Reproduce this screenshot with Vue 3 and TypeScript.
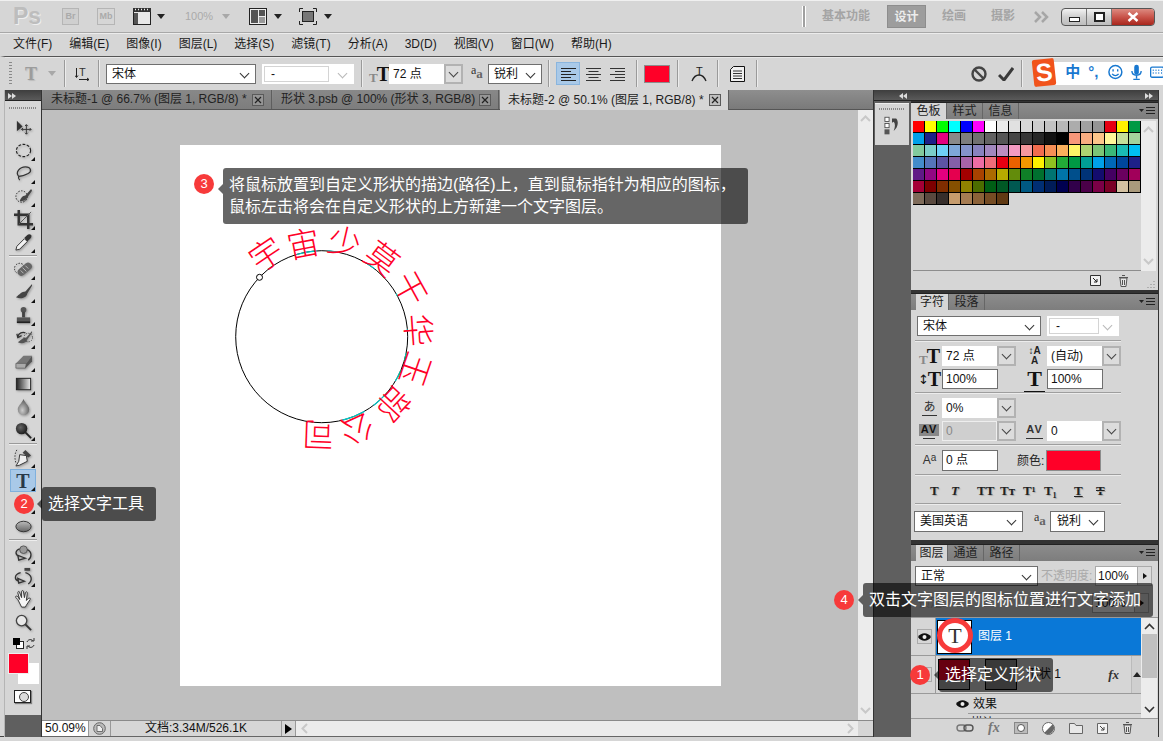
<script setup lang="ts">
const menus = ['文件(F)', '编辑(E)', '图像(I)', '图层(L)', '选择(S)', '滤镜(T)', '分析(A)', '3D(D)', '视图(V)', '窗口(W)', '帮助(H)']

const tabs = [
  { title: '未标题-1 @ 66.7% (图层 1, RGB/8) *', active: false, w: 229 },
  { title: '形状 3.psb @ 100% (形状 3, RGB/8)', active: false, w: 226 },
  { title: '未标题-2 @ 50.1% (图层 1, RGB/8) *', active: true, w: 229 },
]

const swatches = [
  '#ff0000', '#ffff00', '#00ff00', '#00ffff', '#0000ff', '#ff00ff', '#ffffff', '#ebebeb', '#e1e1e1', '#d7d7d7', '#cccccc', '#c2c2c2', '#b7b7b7', '#acacac', '#a1a1a1', '#959595', '#e60012', '#fff100', '#009944',
  '#00a0e9', '#1d2088', '#e4007f', '#898989', '#7d7d7d', '#707070', '#626262', '#555555', '#464646', '#363636', '#262626', '#111111', '#000000', '#f7977a', '#f9ad81', '#fdc68a', '#fff799', '#c4df9b', '#a3d39c',
  '#82ca9d', '#7bcdc8', '#6ecff6', '#7ea7d8', '#8493ca', '#8882be', '#a187be', '#bc8dbf', '#f49ac2', '#f6989d', '#f26c4f', '#f68e55', '#fbaf5c', '#fff467', '#acd372', '#7cc576', '#3bb878', '#1abbb4', '#00bff3',
  '#438cca', '#5574b9', '#5c54a4', '#855fa8', '#a763a8', '#ee6ca5', '#ef6c7a', '#e60012', '#eb6100', '#f39800', '#fff100', '#8fc31f', '#22ac38', '#009944', '#009e96', '#00a0e9', '#0068b7', '#00479d', '#1d2088',
  '#601986', '#920783', '#e4007f', '#e5004f', '#a40000', '#a84200', '#ac6a00', '#b7aa00', '#638c0b', '#0f7f27', '#00702f', '#007471', '#0075a9', '#004f8c', '#003377', '#130c6e', '#440062', '#6a005f', '#a1005a',
  '#a40035', '#7d0000', '#7f2d00', '#855000', '#8f8200', '#4b6d00', '#005e15', '#005825', '#005951', '#005982', '#002e73', '#001c58', '#000050', '#31004a', '#4b0049', '#7b0046', '#7a0026', '#d3c1a1', '#a99a7c',
  '#7e6b5a', '#59493f', '#362e2b', '#c69c6d', '#a67c52', '#8c6239', '#754c24', '#603913',
]

const glyphs = [
  { c: '宇', x: 265, y: 253, r: -34 },
  { c: '宙', x: 303, y: 242, r: -11 },
  { c: '少', x: 345, y: 240, r: 13 },
  { c: '莫', x: 383, y: 257, r: 37 },
  { c: '干', x: 412, y: 288, r: 61 },
  { c: '华', x: 420, y: 330, r: 86 },
  { c: '玉', x: 417, y: 370, r: 109 },
  { c: '部', x: 395, y: 405, r: 133 },
  { c: '公', x: 358, y: 430, r: 159 },
  { c: '司', x: 318, y: 437, r: 182 },
]

// Short cyan pieces of the path, given in degrees clockwise from the top.
const cx = 321.7
const cy = 336.7
const radius = 86
function arc(a: number, b: number): string {
  const p = (d: number) => {
    const t = (d * Math.PI) / 180
    return `${(cx + radius * Math.sin(t)).toFixed(1)} ${(cy - radius * Math.cos(t)).toFixed(1)}`
  }
  return `M${p(a)}A${radius} ${radius} 0 0 1 ${p(b)}`
}
const tealArcs = [[-38, -35], [-17, -3], [4, 11], [32, 38], [44, 46], [60, 62], [85, 86], [101, 106], [113, 121], [133, 143], [150, 166]].map(([a, b]) => arc(a, b))

const styleIcons = [
  { t: 'T', cls: 'b', ml: 17, w: 8 },
  { t: 'T', cls: 'i', ml: 13, w: 8 },
  { t: 'TT', cls: 'b', ml: 18, w: 16 },
  { t: 'Tᴛ', cls: 'b', ml: 7, w: 14 },
  { t: 'T¹', cls: 'b', ml: 9, w: 12 },
  { t: 'T₁', cls: 'b', ml: 9, w: 12 },
  { t: 'T', cls: 'u', ml: 18, w: 8 },
  { t: 'T', cls: 's', ml: 14, w: 8 },
]
</script>

<template>
  <div class="app">
    <!-- title bar -->
    <header class="titlebar">
      <span class="ps">Ps</span>
      <span class="bridge br">Br</span>
      <span class="bridge mb">Mb</span>
      <svg class="t-film" width="18" height="17" viewBox="0 0 18 17">
        <rect x=".5" y=".5" width="17" height="16" fill="#e8e8e8" stroke="#222" />
        <rect x="0" y="0" width="18" height="4" fill="#333" />
        <path d="M2 1.500h1M5 1.500h1M8 1.500h1M11 1.500h1M14 1.500h1" stroke="#eee" stroke-width="1.500" />
        <rect x="1" y="5" width="4" height="11" fill="#555" />
      </svg>
      <i class="caret c1"></i>
      <span class="zoomtxt">100%</span>
      <i class="caret light c2"></i>
      <svg class="t-layout" width="18" height="17" viewBox="0 0 18 17">
        <rect x=".5" y=".5" width="17" height="16" fill="#eee" stroke="#222" />
        <rect x="2" y="2" width="7" height="13" fill="#555" />
        <rect x="10" y="2" width="6" height="6" fill="#555" />
        <rect x="10" y="9" width="6" height="6" fill="#999" />
      </svg>
      <i class="caret c3"></i>
      <svg class="t-screen" width="18" height="17" viewBox="0 0 18 17">
        <path d="M.5 4V.5H4M14 .5h3.500V4M17.500 13v3.500H14M4 16.500H.5V13" fill="none" stroke="#222" />
        <rect x="3.500" y="3.500" width="11" height="10" fill="#777" stroke="#222" />
      </svg>
      <i class="caret c4"></i>

      <i class="dbl-rule"></i>
      <span class="ws first">基本功能</span>
      <span class="ws active">设计</span>
      <span class="ws w3">绘画</span>
      <span class="ws w4">摄影</span>
      <svg class="more" width="15" height="12" viewBox="0 0 15 12"><path d="M1 1l5 5-5 5M8 1l5 5-5 5" fill="none" stroke="#a6a6a6" stroke-width="2.500" /></svg>
      <div class="winbtns">
        <span class="wb"><i class="wmin"></i></span>
        <span class="wb"><i class="wmax"></i></span>
        <span class="wb close">
          <svg width="12" height="10" viewBox="0 0 12 10"><path d="M1.500 1l9 8M10.500 1l-9 8" stroke="#fff" stroke-width="2.400" /></svg>
        </span>
      </div>
    </header>

    <nav class="menubar">
      <span v-for="m in menus" :key="m">{{ m }}</span>
    </nav>

    <!-- options bar -->
    <section class="options">
      <i class="grip-v"></i>
      <span class="opt-t">T</span>
      <i class="caret light o-c"></i>
      <i class="vr v1"></i>
      <svg class="o-orient" width="15" height="15" viewBox="0 0 15 15">
        <text x="4" y="10" class="serif-b" font-size="11" fill="#333">T</text>
        <path d="M1.500 2v9M0 9.500l1.500 2 1.500-2M4 13.500h10M12 12l2 1.500-2 1.500" fill="none" stroke="#222" />
      </svg>
      <i class="vr v2"></i>
      <div class="sel o-font">宋体</div>
      <div class="sel disabled o-style"><span class="in">-</span></div>
      <i class="vr v3"></i>
      <span class="tticon o-tt"><small>T</small>T</span>
      <div class="combo o-size"><span class="fld">72 点</span><span class="drop"></span></div>
      <span class="aa o-aa"><small>a</small><b>a</b></span>
      <div class="sel o-aas">锐利</div>
      <i class="vr v4"></i>
      <span class="al active"><svg width="15" height="14" viewBox="0 0 15 14"><path d="M0 1.500h15M0 4.500h10M0 7.500h15M0 10.500h10M0 13.500h15" stroke="#222" /></svg></span>
      <span class="al a2"><svg width="15" height="14" viewBox="0 0 15 14"><path d="M0 1.500h15M2.500 4.500h10M0 7.500h15M2.500 10.500h10M0 13.500h15" stroke="#333" /></svg></span>
      <span class="al a3"><svg width="15" height="14" viewBox="0 0 15 14"><path d="M0 1.500h15M5 4.500h10M0 7.500h15M5 10.500h10M0 13.500h15" stroke="#333" /></svg></span>
      <i class="vr v5"></i>
      <span class="o-color"></span>
      <i class="vr v6"></i>
      <svg class="o-warp" width="16" height="17" viewBox="0 0 16 17">
        <text x="5" y="10" class="serif-b" font-size="11" fill="#222">T</text>
        <path d="M1 16c2-5 4-6 7-6s5 1 7 6" fill="none" stroke="#222" stroke-width="1.300" />
      </svg>
      <i class="vr v7"></i>
      <svg class="o-panel" width="15" height="16" viewBox="0 0 15 16">
        <path d="M.5 3.500L3.500.5h11v15H.5z" fill="#f0f0f0" stroke="#111" />
        <path d="M3 5h9M3 7.500h9M3 10h9M3 12.500h9" stroke="#333" stroke-width="1.200" />
      </svg>
      <i class="vr v8"></i>
      <svg class="o-cancel" width="16" height="16" viewBox="0 0 16 16"><circle cx="8" cy="8" r="6.500" fill="none" stroke="#444" stroke-width="2.400" /><path d="M3.500 3.500l9 9" stroke="#444" stroke-width="2.400" /></svg>
      <svg class="o-commit" width="16" height="14" viewBox="0 0 16 14"><path d="M1 8l5 5 9-12" fill="none" stroke="#3a3a3a" stroke-width="3" /></svg>
      <i class="vr v9"></i>
    </section>

    <!-- IME floating bar -->
    <div class="ime">
      <span class="ime-logo">S</span>
      <span class="ime-zh">中</span>
      <span class="ime-pt">°,</span>
      <svg class="ime-smile" width="16" height="16" viewBox="0 0 16 16"><circle cx="8" cy="8" r="7" fill="none" stroke="#1878d0" stroke-width="1.600" /><path d="M5.500 5v2.500M10.500 5v2.500M4.500 10c2 2.500 5 2.500 7 0" fill="none" stroke="#1878d0" stroke-width="1.500" /></svg>
      <svg class="ime-mic" width="12" height="17" viewBox="0 0 12 17"><rect x="3.500" y="0" width="5" height="11" rx="2.500" fill="#1878d0" /><path d="M1 7c0 6 10 6 10 0M6 12v3M2.500 16h7" fill="none" stroke="#1878d0" stroke-width="1.500" /></svg>
      <svg class="ime-kb" width="14" height="14" viewBox="0 0 14 14"><rect x=".7" y="1.700" width="14" height="11" rx="1.500" fill="none" stroke="#1878d0" stroke-width="1.400" /><path d="M3 5h1M6 5h1M9 5h1M12 5h1M3 8h1M6 8h1M9 8h1M12 8h1" stroke="#1878d0" stroke-width="1.600" /></svg>
    </div>

    <main class="workspace">
      <!-- tools -->
      <aside class="toolbar">
        <div class="tool-head"><i class="arrows r"></i></div>
        <i class="dotgrip"></i>
        <div class="tools">
          <div class="tool plain"><svg viewBox="0 0 20 20"><path d="M3 3v11l6-5z" fill="#333" /><path d="M13 7v10M8 12h10M11.500 8.500L13 7l1.500 1.500M11.500 15.500L13 17l1.500-1.500M9.500 10.500L8 12l1.500 1.500M16.500 10.500L18 12l-1.500 1.500" fill="none" stroke="#333" /></svg></div>
          <div class="tool"><svg viewBox="0 0 20 20"><ellipse cx="10" cy="10" rx="7.500" ry="6.500" fill="none" stroke="#222" stroke-width="1.200" stroke-dasharray="3 1.500" /></svg></div>
          <div class="tool"><svg viewBox="0 0 20 20"><path d="M5 13C1 9 6 3 12 3s7 5 3 7-8 3-10 3zM5 13c-1 2 0 3 1 4" fill="none" stroke="#333" stroke-width="1.300" /></svg></div>
          <div class="tool"><svg viewBox="0 0 20 20"><circle cx="8" cy="10" r="6" fill="none" stroke="#222" stroke-dasharray="1.500 1.500" /><path d="M18 2l-6 7c-3 0-5 3-6 6 3 0 7-1 8-4l5-7z" fill="#444" /></svg></div>
          <div class="tool"><svg viewBox="0 0 20 20"><path d="M5 0v15h15" fill="none" stroke="#333" stroke-width="2.600" /><path d="M0 5h15v15" fill="none" stroke="#333" stroke-width="2.600" /><path d="M5 15L18 2" stroke="#555" /></svg></div>
          <div class="tool"><svg viewBox="0 0 20 20"><path d="M2 18l1-4 8-8 3 3-8 8z" fill="#f2f2f2" stroke="#333" /><path d="M11 5l3-3c1-1 3-1 4 0s0 3-1 4l-3 3z" fill="#333" /></svg></div>
          <i class="hr"></i>
          <div class="tool"><svg viewBox="0 0 20 20"><circle cx="6" cy="9" r="5.500" fill="none" stroke="#222" stroke-dasharray="1.500 1.500" /><rect x="3" y="6" width="17" height="8" rx="4" transform="rotate(-40 11 10)" fill="#666" /><path d="M9 8l4 4M12 6l3 3M7 11l3 3" stroke="#bbb" /></svg></div>
          <div class="tool"><svg viewBox="0 0 20 20"><path d="M19 1l-7 8c-4 0-6 3-10 6 5 2 11 1 12-4l5-8z" fill="#444" /></svg></div>
          <div class="tool"><svg viewBox="0 0 20 20"><circle cx="10" cy="4" r="3" fill="#555" /><rect x="8.500" y="6" width="3" height="6" fill="#444" /><rect x="3" y="12" width="14" height="4" fill="#555" /><rect x="3" y="16" width="14" height="2" fill="#222" /></svg></div>
          <div class="tool"><svg viewBox="0 0 20 20"><path d="M4 8c1-4 5-5 8-4M3 5l1 4 4-2" fill="none" stroke="#333" stroke-width="1.300" /><path d="M19 2l-6 7c-4 0-6 3-9 5 4 2 9 1 10-3l5-7z" fill="#555" /><circle cx="15" cy="9" r="4.500" fill="none" stroke="#444" stroke-dasharray="1.300 1.300" /></svg></div>
          <div class="tool"><svg viewBox="0 0 20 20"><path d="M2 12l8-8h9l-6 8z" fill="#777" /><path d="M2 12v5h10l1-5z" fill="#aaa" stroke="#555" stroke-width=".7" /><path d="M12 17l7-7V4l-6 8z" fill="#555" /></svg></div>
          <div class="tool"><svg viewBox="0 0 20 20"><defs><linearGradient id="g1" x1="0" x2="1"><stop offset="0" stop-color="#222" /><stop offset="1" stop-color="#eee" /></linearGradient></defs><rect x="2.500" y="3.500" width="15" height="12" fill="url(#g1)" stroke="#222" /></svg></div>
          <div class="tool"><svg viewBox="0 0 20 20"><defs><radialGradient id="g2" cx=".4" cy=".7" r=".7"><stop offset="0" stop-color="#ccc" /><stop offset="1" stop-color="#555" /></radialGradient></defs><path d="M10 1c2 5 6 7 6 11a6 6 0 0 1-12 0c0-4 4-6 6-11z" fill="url(#g2)" /></svg></div>
          <div class="tool"><svg viewBox="0 0 20 20"><defs><radialGradient id="g3" cx=".4" cy=".4" r=".7"><stop offset="0" stop-color="#666" /><stop offset="1" stop-color="#111" /></radialGradient></defs><circle cx="8" cy="8" r="6" fill="url(#g3)" /><path d="M12 12l6 6" stroke="#222" stroke-width="2" /></svg></div>
          <i class="hr"></i>
          <div class="tool"><svg viewBox="0 0 20 20"><path d="M6 7l7 1 1 6-8 4-4 1 3-5z" fill="#eee" stroke="#333" /><path d="M12 2l6 6-3 2-6-5z" fill="#444" /><path d="M3 2C0 7 1 12 2 16" fill="none" stroke="#333" stroke-dasharray="1.500 1.500" /></svg></div>
          <div class="tool selected"><span class="tool-t">T</span></div>
          <div class="tool"><svg viewBox="0 0 20 20"><rect x="3" y="4" width="14" height="12" fill="#777" /></svg></div>
          <div class="tool"><svg viewBox="0 0 20 20"><defs><linearGradient id="g4" x1="0" x2="0" y1="0" y2="1"><stop offset="0" stop-color="#bbb" /><stop offset="1" stop-color="#666" /></linearGradient></defs><ellipse cx="10" cy="10" rx="8" ry="5.500" fill="url(#g4)" stroke="#333" /></svg></div>
          <i class="hr"></i>
          <div class="tool"><svg viewBox="0 0 20 20"><circle cx="10" cy="6" r="4" fill="#999" stroke="#555" /><path d="M6 5C1 7 1 11 5 13M14 6c5 2 5 8 1 11M12 15l-8-3 1 5z" fill="none" stroke="#333" stroke-width="1.400" /></svg></div>
          <div class="tool"><svg viewBox="0 0 20 20"><rect x="11" y="1" width="6" height="3" fill="#444" /><path d="M7 6C0 8 0 13 5 15M12 6c7 2 8 8 3 12M11 15l-7-3 1 5z" fill="none" stroke="#333" stroke-width="1.400" /></svg></div>
          <div class="tool"><svg viewBox="0 0 20 20"><path d="M4 10L2 8c-1-2 1-2 2-1l2 3-2-7c0-2 2-2 2 0l2 5V2c0-2 2-2 2 0l1 6 1-5c1-2 2-1 2 0l-1 8 2-2c2-1 3 0 2 1l-4 6-1 2H8z" fill="#f4f4f4" stroke="#333" /></svg></div>
          <div class="tool plain"><svg viewBox="0 0 20 20"><circle cx="8" cy="8" r="5.500" fill="#e8e8e8" stroke="#444" stroke-width="1.400" /><path d="M12 12l6 6" stroke="#333" stroke-width="2" /></svg></div>
        </div>
        <div class="mini-colors">
          <svg width="11" height="11" viewBox="0 0 11 11"><rect x="3.500" y="3.500" width="7" height="7" fill="#fff" stroke="#222" /><rect x="0" y="0" width="7" height="7" fill="#000" /></svg>
          <svg width="11" height="11" viewBox="0 0 11 11"><path d="M2 4C3 1 7 1 8 3M9 7c-1 3-5 3-6 1M6 3h3V0M5 8H2v3" fill="none" stroke="#333" /></svg>
        </div>
        <div class="swatch-pair"><i class="bgc"></i><i class="fgc"></i></div>
        <div class="qmask"><i></i></div>
        <div class="tool-foot"></div>
      </aside>

      <!-- document area -->
      <div class="center">
        <div class="tabstrip">
          <div v-for="t in tabs" :key="t.title" class="tab" :class="{ on: t.active }" :style="{ width: t.w + 'px' }">
            <span>{{ t.title }}</span>
            <svg width="12" height="12" viewBox="0 0 12 12"><rect x=".5" y=".5" width="11" height="11" fill="#a8a8a8" fill-opacity=".5" stroke="#5a5a5a" /><path d="M3 3l6 6M9 3l-6 6" stroke="#222" stroke-width="1.200" /></svg>
          </div>
        </div>
        <div class="canvas-row">
          <div class="canvas">
            <div class="doc">
              <svg class="art" width="541" height="541" viewBox="180 145 541 541">
                <circle cx="321.700" cy="336.700" r="86" fill="none" stroke="#000" stroke-width="1" />
                <path v-for="(d, i) in tealArcs" :key="i" :d="d" fill="none" stroke="#00c8c8" stroke-width="1.200" />
                <circle cx="259.500" cy="277.300" r="3" fill="#fff" stroke="#000" />
                <text v-for="g in glyphs" :key="g.c" class="arc-text" :transform="`translate(${g.x} ${g.y}) rotate(${g.r})`" text-anchor="middle" dominant-baseline="central">{{ g.c }}</text>
              </svg>
            </div>
          </div>
          <div class="vscroll">
            <svg width="11" height="7" viewBox="0 0 11 7"><path d="M1 6l4.500-4.500L10 6" fill="none" stroke="#c8c8c8" stroke-width="2" /></svg>
            <svg width="11" height="7" viewBox="0 0 11 7"><path d="M1 1l4.500 4.500L10 1" fill="none" stroke="#c8c8c8" stroke-width="2" /></svg>
          </div>
        </div>
        <footer class="status">
          <span class="st-zoom">50.09%</span>
          <span class="st-icon"><svg width="13" height="13" viewBox="0 0 13 13"><circle cx="6.500" cy="6.500" r="5.800" fill="#bbb" stroke="#666" /><path d="M4 3.500h3l2.500 3v3H4z" fill="#eee" stroke="#555" stroke-width=".8" /></svg></span>
          <span class="st-doc">文档:3.34M/526.1K</span>
          <span class="st-arrow"><i></i></span>
          <div class="hscroll">
            <svg width="7" height="11" viewBox="0 0 7 11"><path d="M6 1L1.500 5.500 6 10" fill="none" stroke="#c8c8c8" stroke-width="2" /></svg>
            <svg width="7" height="11" viewBox="0 0 7 11"><path d="M1 1l4.500 4.500L1 10" fill="none" stroke="#c8c8c8" stroke-width="2" /></svg>
          </div>
          <span class="st-corner"></span>
        </footer>
      </div>

      <!-- collapsed dock -->
      <div class="dock-col">
        <div class="dock-head"><i class="arrows l"></i></div>
        <div class="mini-panel">
          <i class="dotgrip light"></i>
          <svg width="18" height="20" viewBox="0 0 20 24">
            <rect x="1.500" y="1.500" width="5" height="5" fill="#fff" stroke="#444" />
            <rect x="1.500" y="9" width="5" height="5" fill="#fff" stroke="#444" />
            <rect x="1" y="16" width="6" height="6" fill="#555" />
            <path d="M10 3h5c3 3 3 10-3 15 2-5 2-9 0-11l-2 1z" fill="#444" />
          </svg>
        </div>
      </div>

      <!-- panels -->
      <div class="panels">
        <div class="dock-head"><i class="arrows r end"></i></div>

        <section class="panel p-swatch">
          <div class="ptabs">
            <span class="ptab on">色板</span><span class="ptab">样式</span><span class="ptab">信息</span>
            <svg class="pmenu" width="16" height="8" viewBox="0 0 16 8"><path d="M0 2h5L2.500 5z" fill="#222" /><path d="M7 .5h9M7 3.500h9M7 6.500h9" stroke="#222" /></svg>
          </div>
          <div class="sw-body">
            <div class="sw-grid">
              <i v-for="(c, idx) in swatches" :key="idx" :style="{ background: c }"></i>
            </div>
            <div class="vscroll sw-scroll">
              <svg width="11" height="7" viewBox="0 0 11 7"><path d="M1 6l4.500-4.500L10 6" fill="none" stroke="#c8c8c8" stroke-width="2" /></svg>
              <svg width="11" height="7" viewBox="0 0 11 7"><path d="M1 1l4.500 4.500L10 1" fill="none" stroke="#c8c8c8" stroke-width="2" /></svg>
            </div>
          </div>
          <div class="sw-foot">
            <svg width="11" height="11" viewBox="0 0 11 11"><path d="M.5 10.500V.5h10v10z" fill="#f3f3f3" stroke="#333" /><path d="M3 3l4 4M7 4v3H4" fill="none" stroke="#222" /></svg>
            <svg width="11" height="12" viewBox="0 0 11 12"><path d="M2 3h7l-1 8.500H3z" fill="#e6e6e6" stroke="#555" /><path d="M1 2.500h9M4 .5h3M4.500 5v5M6.500 5v5" stroke="#555" fill="none" /></svg>
            <svg class="corner-grip" width="9" height="9" viewBox="0 0 9 9"><path d="M7.500 1.500h1M4.500 4.500h1M7.500 4.500h1M1.500 7.500h1M4.500 7.500h1M7.500 7.500h1" stroke="#888" /></svg>
          </div>
        </section>

        <section class="panel p-char">
          <div class="ptabs">
            <span class="ptab on w2">字符</span><span class="ptab">段落</span>
            <svg class="pmenu" width="16" height="8" viewBox="0 0 16 8"><path d="M0 2h5L2.500 5z" fill="#222" /><path d="M7 .5h9M7 3.500h9M7 6.500h9" stroke="#222" /></svg>
          </div>
          <div class="char-body">
            <div class="row r-font">
              <div class="sel c-font">宋体</div>
              <div class="sel disabled c-style"><span class="in">-</span></div>
            </div>
            <hr class="sep" />
            <div class="row">
              <div class="cell"><span class="tticon ci"><small>T</small>T</span><div class="combo"><span class="fld">72 点</span><span class="drop"></span></div></div>
              <div class="cell"><span class="ci lead"><b>↕A</b><b>A</b></span><div class="combo"><span class="fld">(自动)</span><span class="drop"></span></div></div>
            </div>
            <div class="row">
              <div class="cell"><span class="ci bigt"><small class="updown">↕</small>T</span><span class="fld solo">100%</span></div>
              <div class="cell"><span class="ci bigt wide">T<em></em></span><span class="fld solo">100%</span></div>
            </div>
            <hr class="sep s2" />
            <div class="row">
              <div class="cell"><span class="ci tsume">あ<em></em></span><div class="combo"><span class="fld">0%</span><span class="drop"></span></div></div>
            </div>
            <div class="row">
              <div class="cell"><span class="ci av dark">AV<em></em></span><div class="combo"><span class="fld dis">0</span><span class="drop"></span></div></div>
              <div class="cell"><span class="ci av">AV<em></em></span><div class="combo"><span class="fld">0</span><span class="drop"></span></div></div>
            </div>
            <hr class="sep s2" />
            <div class="row r-color">
              <div class="cell"><span class="ci base"><small>A</small><small class="sup">a</small></span><span class="fld solo tall">0 点</span></div>
              <span class="colorlbl">颜色:</span>
              <span class="colorbox"></span>
            </div>
            <hr class="sep s3" />
            <div class="row r-styles">
              <span v-for="(s, i) in styleIcons" :key="i" class="sty" :class="s.cls" :style="{ marginLeft: s.ml + 'px', width: s.w + 'px' }">{{ s.t }}</span>
            </div>
            <hr class="sep" />
            <div class="row r-lang">
              <div class="sel c-lang">美国英语</div>
              <span class="aa c-aa"><small>a</small><b>a</b></span>
              <div class="sel c-aas">锐利</div>
            </div>
          </div>
        </section>

        <section class="panel p-layers">
          <div class="ptabs">
            <span class="ptab on w3">图层</span><span class="ptab">通道</span><span class="ptab">路径</span>
            <svg class="pmenu" width="16" height="8" viewBox="0 0 16 8"><path d="M0 2h5L2.500 5z" fill="#222" /><path d="M7 .5h9M7 3.500h9M7 6.500h9" stroke="#222" /></svg>
          </div>
          <div class="lay-top">
            <div class="sel l-mode">正常</div>
            <span class="l-lbl">不透明度:</span>
            <span class="l-val">100%</span>
            <span class="l-arrow"><i></i></span>
          </div>
          <div class="lay-top second">
            <span class="l-lock">锁定:</span>
            <span class="l-lbl fill">填充:</span>
            <span class="l-val">100%</span>
            <span class="l-arrow"><i></i></span>
          </div>
          <div class="lay-list">
            <div class="lay-rows">
              <div class="lr sel-row">
                <span class="eye-col"><span class="eye-box"><svg width="13" height="8" viewBox="0 0 13 8"><path d="M0 4c3-5 10-5 13 0-3 5-10 5-13 0z" fill="#111" /><circle cx="6.500" cy="4" r="2" fill="#eee" /></svg></span></span>
                <span class="th th-t"><i></i></span>
                <span class="lname">图层 1</span>
              </div>
              <div class="lr">
                <span class="eye-col"><span class="eye-box"></span></span>
                <span class="th th-r"><i></i></span>
                <span class="th th-m"></span>
                <span class="lname dk">形状 1</span>
                <span class="fx">fx</span>
                <span class="mini-scroll"><i></i></span>
              </div>
              <div class="lr eff">
                <svg width="13" height="8" viewBox="0 0 13 8"><path d="M0 4c3-5 10-5 13 0-3 5-10 5-13 0z" fill="#111" /><circle cx="6.500" cy="4" r="2" fill="#eee" /></svg>
                <span>效果</span>
              </div>
              <div class="lr eff2"><span>描边</span></div>
            </div>
            <div class="lay-scroll">
              <svg width="11" height="7" viewBox="0 0 11 7"><path d="M1 6l4.500-4.500L10 6" fill="none" stroke="#333" stroke-width="1.600" /></svg>
              <i></i>
              <svg width="11" height="7" viewBox="0 0 11 7"><path d="M1 1l4.500 4.500L10 1" fill="none" stroke="#333" stroke-width="1.600" /></svg>
            </div>
          </div>
          <div class="lay-foot">
            <svg width="18" height="10" viewBox="0 0 18 10"><rect x="1" y="2" width="9" height="6" rx="3" fill="none" stroke="#777" stroke-width="1.400" /><rect x="8" y="2" width="9" height="6" rx="3" fill="none" stroke="#555" stroke-width="1.400" /></svg>
            <span class="lf-fx">fx</span>
            <svg width="14" height="12" viewBox="0 0 14 12"><rect x=".5" y=".5" width="13" height="11" fill="#bbb" stroke="#888" /><circle cx="7" cy="6" r="3.500" fill="#fff" stroke="#555" /></svg>
            <svg width="13" height="13" viewBox="0 0 13 13"><circle cx="6.500" cy="6.500" r="6" fill="#fff" stroke="#666" /><path d="M10.700 2.300a6 6 0 0 1-8.400 8.400z" fill="#666" /></svg>
            <svg width="14" height="11" viewBox="0 0 14 11"><path d="M.5 10.500v-10h5l1.500 2h6.500v8z" fill="#e8e8e8" stroke="#666" /></svg>
            <svg width="11" height="11" viewBox="0 0 11 11"><path d="M.5 10.500V.5h10v10z" fill="#f3f3f3" stroke="#666" /><path d="M3 3l4 4M7 4v3H4" fill="none" stroke="#444" /></svg>
            <svg width="11" height="12" viewBox="0 0 11 12"><path d="M2 3h7l-1 8.500H3z" fill="#e6e6e6" stroke="#555" /><path d="M1 2.500h9M4 .5h3M4.500 5v5M6.500 5v5" stroke="#555" fill="none" /></svg>
          </div>
        </section>
      </div>
      <div class="edge-r"></div>
    </main>

    <!-- annotations laid over the interface -->
    <div class="note n3"><b class="dot">3</b><div class="bubble">将鼠标放置到自定义形状的描边(路径)上，直到鼠标指针为相应的图标，<br />鼠标左击将会在自定义形状的上方新建一个文字图层。</div></div>
    <div class="note n2"><b class="dot">2</b><div class="bubble">选择文字工具</div></div>
    <div class="note n4"><b class="dot">4</b><div class="bubble">双击文字图层的图标位置进行文字添加</div></div>
    <div class="note n1"><b class="dot">1</b><div class="bubble">选择定义形状</div></div>
    <div class="ring">T</div>
  </div>
</template>

<style scoped>
* { box-sizing: border-box; }
i, em { display: block; font-style: normal; }
.app {
  position: relative;
  width: 1163px;
  height: 741px;
  overflow: hidden;
  display: flex;
  flex-direction: column;
  background: #d6d6d6;
  color: #111;
  font: 12px/1.2 "Liberation Sans", "Noto Sans CJK SC", sans-serif;
  border-top: 1px solid #f0f0f0;
}

/* title bar */
.titlebar { height: 32px; display: flex; align-items: center; flex: none; position: relative; border-bottom: 1px solid #a8a8a8; box-shadow: 0 1px 0 #ececec; padding-left: 13px; }
.ps { font: bold 23px "Liberation Sans", sans-serif; color: #bdbdbd; text-shadow: 1px 1px 0 #eee; width: 22px; }
.bridge { width: 17px; height: 17px; border: 1px solid #b5b5b5; font: bold 9px/15px "Liberation Sans", sans-serif; text-align: center; color: #aaa; background: #cfcfcf; }
.br { margin-left: 27px; }
.mb { margin-left: 18px; background: transparent; width: 18px; }
.t-film { margin-left: 18px; }
.caret { width: 0; height: 0; border: 4px solid transparent; border-top: 5px solid #222; border-bottom: 0; }
.caret.light { border-top-color: #a8a8a8; }
.c1 { margin-left: 6px; }
.zoomtxt { margin-left: 20px; color: #aaa; font-size: 11px; width: 28px; }
.c2 { margin-left: 9px; }
.t-layout { margin-left: 19px; }
.c3 { margin-left: 7px; }
.t-screen { margin-left: 17px; }
.c4 { margin-left: 7px; }
.dbl-rule { margin-left: auto; width: 4px; height: 21px; border-left: 1px solid #fff; border-right: 1px solid #fff; background: #a0a0a0; background-clip: padding-box; }
.ws { font-size: 12px; font-weight: 700; color: #a4a4a4; }
.ws.first { margin-left: 16px; }
.ws.active { margin-left: 17px; width: 39px; height: 23px; line-height: 23px; text-align: center; background: #9d9d9d; color: #ececec; border: 1px solid #8d8d8d; }
.ws.w3 { margin-left: 16px; }
.ws.w4 { margin-left: 25px; }
.more { margin-left: 19px; }
.winbtns { margin-left: 12px; margin-right: 8px; display: flex; height: 18px; border: 1px solid #555; border-radius: 4px; overflow: hidden; background: linear-gradient(#f2f2f2, #cfcfcf 50%, #bdbdbd); }
.wb { width: 25px; display: flex; align-items: center; justify-content: center; border-right: 1px solid #777; }
.wmin { width: 11px; height: 5px; border: 1px solid #222; background: #fff; margin-top: 5px; }
.wmax { width: 11px; height: 10px; border: 2px solid #222; background: #fff; }
.wb.close { width: 42px; border: 0; background: linear-gradient(#dc8a80, #c9544a 50%, #a8261c); }

.menubar { height: 23px; flex: none; display: flex; align-items: center; gap: 17px; padding-left: 13px; color: #1a1a1a; }

/* options */
.options { height: 34px; flex: none; display: flex; align-items: center; border-top: 1px solid #555; border-left: 5px solid #d6d6d6; box-shadow: inset 0 1px 0 #e8e8e8; }
.grip-v { width: 3px; height: 24px; margin-left: 4px; background: repeating-linear-gradient(#8a8a8a 0 1px, transparent 1px 3px); }
.opt-t { margin-left: 13px; font: bold 18px/1 "Liberation Serif", serif; color: #9c9c9c; width: 14px; text-shadow: 1px 1px 1px #bbb; }
.o-c { margin-left: 9px; }
.vr { width: 1px; height: 27px; background: #9a9a9a; box-shadow: 1px 0 0 #ececec; flex: none; }
.v1 { margin-left: 8px; }
.o-orient { margin-left: 10px; }
.v2 { margin-left: 8px; }
.sel { position: relative; height: 20px; background: #fff; border: 1px solid #6f6f6f; line-height: 18px; padding-left: 5px; color: #111; font-size: 12px; }
.sel::after { content: ""; position: absolute; right: 7px; top: 5px; width: 6px; height: 6px; border-right: 1px solid #333; border-bottom: 1px solid #333; transform: rotate(45deg); }
.sel.disabled { border: 1px solid #fff; padding: 0; background: #fff; }
.sel.disabled::after { border-color: #b8b8b8; }
.sel .in { display: block; margin: 1px; width: 72%; height: 16px; border: 1px solid #d4d4d4; line-height: 14px; padding-left: 6px; }
.o-font { width: 150px; margin-left: 7px; }
.o-style { width: 92px; margin-left: 6px; }
.v3 { margin-left: 7px; }
.tticon { display: inline-flex; align-items: flex-end; font: bold 20px/1 "Liberation Serif", serif; color: #111; }
.tticon small { font-size: 13px; color: #888; margin-right: -1px; }
.o-tt { margin-left: 7px; width: 20px; }
.combo { display: flex; height: 20px; }
.fld { display: block; background: #fff; height: 20px; line-height: 18px; padding-left: 3px; font-size: 12px; color: #111; }
.combo .fld { width: 55px; border: 1px solid #fff; border-right: 0; }
.drop { position: relative; width: 19px; height: 20px; border: 2px solid #b2b2b2; background: #dcdcdc; }
.drop::after { content: ""; position: absolute; left: 4px; top: 3px; width: 6px; height: 6px; border-right: 1px solid #444; border-bottom: 1px solid #444; transform: rotate(45deg); }
.aa { display: inline-flex; align-items: flex-end; font: 12px/1 "Liberation Serif", serif; color: #333; }
.aa small { font-size: 12px; position: relative; top: -4px; }
.aa b { font-size: 13px; font-weight: 700; color: #666; }
.o-aa { margin-left: 8px; width: 14px; }
.o-aas { width: 54px; margin-left: 3px; padding-left: 5px; }
.v4 { margin-left: 6px; }
.al { display: flex; width: 15px; flex: none; }
.al.active { width: 24px; height: 23px; margin-left: 7px; align-items: center; justify-content: center; background: #a9c9e8; border: 1px solid #8ab5de; }
.a2 { margin-left: 6px; }
.a3 { margin-left: 9px; }
.v5 { margin-left: 11px; }
.o-color { width: 26px; height: 18px; margin-left: 7px; background: #ff0028; border: 1px solid #8c8c8c; }
.v6 { margin-left: 7px; }
.o-warp { margin-left: 13px; }
.v7 { margin-left: 10px; }
.o-panel { margin-left: 12px; }
.v8 { margin-left: 11px; }
.o-cancel { margin-left: 214px; }
.o-commit { margin-left: 11px; }
.v9 { margin-left: 7px; }

.ime { position: absolute; left: 1033px; top: 57px; display: flex; align-items: center; height: 28px; width: 130px; }
.ime::before { content: ""; position: absolute; left: 20px; right: 0; top: 4px; bottom: 1px; background: #fff; }
.ime > * { position: relative; }
.ime-logo { width: 24px; height: 27px; background: #f1531b; color: #fff; font: bold 25px/27px "Liberation Sans", sans-serif; text-align: center; border-radius: 2px; transform: rotate(-6deg); }
.ime-zh { margin-left: 10px; font-weight: 700; font-size: 15px; color: #1878d0; }
.ime-pt { margin-left: 8px; font-weight: 700; font-size: 15px; color: #1878d0; width: 12px; }
.ime-smile { margin-left: 9px; }
.ime-mic { margin-left: 8px; }
.ime-kb { margin-left: 8px; }

/* workspace */
.workspace { flex: 1; min-height: 0; display: flex; border-bottom: 4px solid #d6d6d6; box-shadow: inset 0 -1px 0 #444; }
.toolbar { width: 38px; margin-left: 4px; flex: none; display: flex; flex-direction: column; align-items: stretch; border-left: 1px solid #b5b5b5; border-right: 1px solid #333; background: #d6d6d6; position: relative; }
.tool-head, .dock-head { height: 11px; flex: none; background: linear-gradient(#3e3e3e, #5a5a5a); position: relative; border-bottom: 1px solid #222; }
.arrows { position: absolute; top: 3px; width: 8px; height: 7px; }
.arrows::before, .arrows::after { content: ""; position: absolute; top: 0; border: 3px solid transparent; }
.arrows.r { left: 3px; }
.arrows.r::before { left: 0; border-left: 4px solid #ddd; border-right: 0; }
.arrows.r::after { left: 4px; border-left: 4px solid #ddd; border-right: 0; }
.arrows.l { left: 25px; }
.arrows.l::before { left: 0; border-right: 4px solid #ddd; border-left: 0; }
.arrows.l::after { left: 4px; border-right: 4px solid #ddd; border-left: 0; }
.arrows.end { left: auto; right: 5px; }
.dotgrip { height: 2px; margin: 6px 4px 7px; background: repeating-linear-gradient(90deg, #888 0 1px, transparent 1px 2px); flex: none; }
.tools { display: flex; flex-direction: column; align-items: center; gap: 0; }
.tool { position: relative; width: 26px; height: 23px; display: flex; align-items: center; justify-content: center; flex: none; }
.tool svg { width: 19px; height: 19px; filter: drop-shadow(1px 1px 1px rgba(0,0,0,.3)); }
.tool::after { content: ""; position: absolute; right: 1px; bottom: 1px; border: 2px solid transparent; border-right-color: #111; border-bottom-color: #111; }
.tool.plain::after { display: none; }
.tool.selected { background: #a9c9e8; border: 1px solid #7fb0dd; }
.tool.selected::after { right: 0; bottom: 0; }
.tool-t { font: 700 20px/1 "Liberation Serif", serif; color: #2a3a48; }
.hr { width: 28px; height: 1px; background: #9a9a9a; margin: 1px 0 2px; box-shadow: 0 1px 0 #eee; flex: none; }
.mini-colors { display: flex; justify-content: space-between; padding: 2px 5px 0 8px; margin-top: 2px; height: 15px; flex: none; }
.swatch-pair { position: relative; height: 30px; margin: 2px 0 0; flex: none; }
.bgc, .fgc { position: absolute; width: 21px; height: 21px; }
.fgc { left: 3px; top: 0; background: #ff0028; border: 1px solid #eee; }
.bgc { left: 13px; top: 10px; background: #fff; }
.qmask { height: 32px; flex: none; padding: 7px 0 0 9px; }
.qmask i { width: 17px; height: 13px; background: #fff; border: 1px solid #222; box-shadow: 1px 1px 1px rgba(0,0,0,.4); position: relative; }
.qmask i::after { content: ""; position: absolute; left: 4px; top: 1px; width: 8px; height: 8px; border-radius: 50%; background: #ddd; border: 1px solid #444; }
.tool-foot { flex: 1; background: #5f5f5f; }

.center { width: 832px; flex: none; display: flex; flex-direction: column; border-right: 1px solid #333; }
.tabstrip { height: 20px; flex: none; display: flex; gap: 1px; padding-left: 1px; background: linear-gradient(#8e8e8e, #7a7a7a); border-bottom: 1px solid #555; }
.tab { display: flex; align-items: center; justify-content: space-between; padding: 0 7px 0 8px; background: linear-gradient(#888, #7d7d7d); color: #222; white-space: nowrap; border-right: 1px solid #5e5e5e; }
.tab.on { background: #d6d6d6; height: 20px; }
.tab svg { flex: none; }
.canvas-row { flex: 1; min-height: 0; display: flex; }
.canvas { flex: 1; background: #bfbfbf; padding: 35px 0 0 138px; }
.doc { width: 541px; height: 541px; background: #fff; }
.art { display: block; overflow: visible; }
.arc-text { font: 33px "Noto Sans CJK SC", sans-serif; font-weight: 300; fill: #ff0028; }
.vscroll { width: 15px; flex: none; background: #ececec; display: flex; flex-direction: column; justify-content: space-between; align-items: center; padding: 5px 0 6px; }
.status { flex: none; display: flex; border-top: 1px solid #8a8a8a; background: #d6d6d6; box-shadow: inset 0 -1px 0 #666; height: 17px; }
.st-zoom { width: 47px; background: #fff; padding-left: 3px; line-height: 15px; font-size: 12px; height: 15px; border-right: 1px solid #999; color: #111; }
.st-icon { width: 22px; height: 15px; display: flex; align-items: center; justify-content: center; border-right: 1px solid #999; }
.st-doc { width: 171px; text-align: center; line-height: 15px; color: #111; border-right: 1px solid #999; height: 15px; }
.st-arrow { width: 14px; height: 15px; display: flex; align-items: center; justify-content: center; border-right: 1px solid #999; }
.st-arrow i { border: 5px solid transparent; border-left: 7px solid #000; border-right: 0; }
.hscroll { flex: 1; height: 15px; background: #ececec; display: flex; justify-content: space-between; align-items: center; padding: 0 4px 0 5px; }
.st-corner { width: 15px; height: 15px; background: #d6d6d6; }

.dock-col { width: 37px; flex: none; background: #5f5f5f; display: flex; flex-direction: column; }
.mini-panel { margin: 2px 2px 0 1px; height: 42px; background: #d6d6d6; padding-top: 1px; display: flex; flex-direction: column; align-items: center; border-top: 1px solid #eee; }
.mini-panel .dotgrip { width: 26px; margin: 3px 0 6px; flex: none; }

.panels { width: 247px; flex: none; display: flex; flex-direction: column; background: #333; }
.panel { background: #d6d6d6; display: flex; flex-direction: column; }
.ptabs { height: 17px; flex: none; display: flex; position: relative; background: linear-gradient(#8c8c8c, #7d7d7d); border-top: 1px solid #222; }
.ptab { width: 36px; text-align: center; line-height: 16px; border-right: 1px solid #666; color: #222; }
.ptab.on { background: #d6d6d6; color: #222; }
.ptab.w2 { margin-left: 5px; width: 33px; }
.ptab.w3 { margin-left: 5px; width: 32px; }
.pmenu { position: absolute; right: 3px; top: 4px; }
.p-swatch { height: 188px; margin-top: 1px; margin-bottom: 3px; }
.sw-body { height: 152px; flex: none; display: flex; padding: 2px 0 0 2px; }
.sw-grid { width: 228px; height: 150px; display: grid; grid-template-columns: repeat(19, 12px); grid-auto-rows: 12px; border-bottom: 1px solid #8d8d8d; }
.sw-grid i { border-right: 1px solid #000; border-bottom: 1px solid #000; }
.sw-scroll { height: 150px; }
.sw-foot { flex: 1; display: flex; justify-content: flex-end; align-items: center; gap: 17px; padding: 0 3px 0 0; }
.corner-grip { margin-left: 0; align-self: flex-end; margin-bottom: 1px; }

.p-char { height: 247px; margin-bottom: 4px; }
.char-body { padding: 0 0 0 6px; }
.row { display: flex; margin-bottom: 3px; height: 20px; }
.r-font { margin-top: 6px; margin-bottom: 4px; gap: 6px; }
.c-font { width: 124px; }
.c-style { width: 72px; }
.sep { border: 0; height: 1px; background: #9e9e9e; box-shadow: 0 1px 0 #ececec; margin: 0 0 5px -2px; width: 206px; }
.sep.s2 { margin-top: 1px; }
.sep.s3 { margin-top: 3px; }
.cell { display: flex; align-items: center; width: 99px; margin-right: 6px; }
.ci { width: 25px; flex: none; display: flex; justify-content: center; }
.cell .fld.solo { width: 56px; border: 1px solid #6f6f6f; padding-left: 3px; }
.fld.dis { background: #cfcfcf; color: #888; border: 1px solid #eee !important; }
.lead { font: bold 10px/10px "Liberation Sans", sans-serif; flex-direction: column; align-items: center; color: #222; }
.bigt { font: bold 20px/1 "Liberation Serif", serif; color: #111; align-items: center; }
.updown { font: 13px/1 "DejaVu Sans", sans-serif; margin-right: -1px; }
.bigt.wide { font-size: 22px; position: relative; }
.bigt.wide em { position: absolute; left: 2px; right: 2px; bottom: -2px; height: 1px; background: #111; }
.tsume { font: 12px/1 "Noto Sans CJK SC", sans-serif; position: relative; color: #333; padding-bottom: 4px; }
.tsume em { position: absolute; left: 5px; right: 5px; bottom: 0; height: 1px; background: #333; }
.av { font: bold 11px/1 "Liberation Sans", sans-serif; color: #333; position: relative; padding-bottom: 4px; letter-spacing: 1px; }
.av.dark { color: #111; background: linear-gradient(#888 0 12px, transparent 12px); margin: 0 3px 0 2px; width: 20px; }
.av em { position: absolute; left: 4px; right: 4px; bottom: 0; height: 1px; background: #333; }
.base { align-items: flex-end; font-family: "Liberation Sans", sans-serif; color: #333; }
.base small { font-size: 12px; }
.base .sup { font-size: 10px; position: relative; top: -4px; }
.fld.tall { height: 21px; }
.r-color { height: 21px; margin-bottom: 0; }
.r-color .cell { margin-right: 0; width: 81px; }
.colorlbl { width: 29px; padding-top: 4px; margin-left: 19px; color: #222; }
.colorbox { width: 55px; height: 21px; background: #ff0028; border: 1px solid #8c8c8c; margin-left: 0; }
.r-styles { align-items: center; margin-top: 1px; margin-bottom: 3px; margin-left: -4px; }
.sty { font: bold 13px/1 "Liberation Serif", serif; color: #222; flex: none; text-shadow: 1px 1px 1px #aaa; white-space: nowrap; }
.sty.i { font-style: italic; }
.sty.u { text-decoration: underline; }
.sty.s { text-decoration: line-through; }
.r-lang { height: 21px; margin-left: -3px; margin-top: 7px; }
.c-lang { width: 109px; height: 21px; }
.c-aa { margin-left: 11px; width: 14px; height: 16px; align-self: flex-start; }
.c-aas { width: 55px; height: 21px; margin-left: 2px; padding-left: 6px; }

.p-layers { flex: 1; min-height: 0; display: flex; flex-direction: column; }
.lay-top { height: 20px; flex: none; display: flex; align-items: center; margin: 5px 0 0 4px; }
.lay-top.second { margin-top: 7px; margin-bottom: 4px; }
.l-mode { width: 123px; height: 20px; }
.l-lbl { width: 54px; margin-left: 3px; color: #aaa; white-space: nowrap; }
.l-lbl.fill { margin-left: 79px; }
.l-lock { width: 41px; margin-left: 3px; color: #aaa; }
.l-val { width: 42px; height: 20px; background: #fff; line-height: 18px; padding-left: 2px; border: 1px solid #aaa; border-right: 0; }
.l-arrow { width: 15px; height: 20px; display: flex; align-items: center; justify-content: center; border: 1px solid #aaa; background: #dcdcdc; }
.l-arrow i { border: 3px solid transparent; border-left: 4px solid #111; border-right: 0; }
.lay-list { flex: 1; min-height: 0; display: flex; overflow: hidden; border-top: 1px solid #999; }
.lay-rows { width: 230px; flex: none; display: flex; flex-direction: column; }
.lr { height: 38px; flex: none; display: flex; align-items: center; position: relative; border-bottom: 1px solid #9a9a9a; }
.sel-row { height: 38px; background: linear-gradient(90deg, #d6d6d6 0 25px, #0a78d7 25px); }
.eye-col { width: 25px; height: 100%; display: flex; align-items: center; padding-left: 6px; border-right: 1px solid #999; flex: none; }
.eye-box { width: 15px; height: 15px; border: 1px solid #aaa; display: flex; align-items: center; justify-content: center; }
.th { display: block; flex: none; border: 1px solid #000; }
.th-t { width: 35px; height: 34px; margin-left: 1px; background: #fff; }
.th-r { width: 32px; height: 31px; margin-left: 2px; background: linear-gradient(#ff0028 0 68%, #aaa 68%); }
.th-m { width: 32px; height: 31px; margin-left: 15px; background: #909090; }
.lname { margin-left: 6px; color: #fff; }
.lname.dk { color: #111; margin-left: 10px; }
.fx { position: absolute; right: 22px; font: italic bold 13px "Liberation Serif", serif; color: #333; }
.mini-scroll { position: absolute; right: 0; top: 0; bottom: 0; width: 10px; background: #cfcfcf; border-left: 1px solid #bbb; padding: 16px 0 0 1px; }
.mini-scroll i { border: 4px solid transparent; border-bottom: 5px solid #222; border-top: 0; }
.eff { height: 20px; padding-left: 45px; gap: 4px; border-bottom: 0; }
.eff::after { content: ""; position: absolute; left: 57px; right: 0; bottom: 0; height: 1px; background: #9a9a9a; }
.eff2 { height: 18px; padding-left: 60px; border: 0; color: #222; }
.lay-scroll { width: 16px; flex: none; background: #ececec; display: flex; flex-direction: column; align-items: center; padding-top: 5px; gap: 4px; }
.lay-scroll i { width: 15px; height: 44px; background: #c0c0c0; }
.lay-scroll svg:last-child { margin-top: 24px; }
.lay-foot { height: 19px; flex: none; display: flex; align-items: center; justify-content: flex-start; gap: 14px; padding-left: 45px; border-top: 1px solid #999; }
.lf-fx { font: italic bold 14px "Liberation Serif", serif; color: #777; }

.edge-r { flex: 1; background: #d6d6d6; border-left: 1px solid #333; }

/* annotations */
.note { position: absolute; display: flex; align-items: center; }
.dot { position: absolute; width: 20px; height: 20px; border-radius: 50%; background: #f73a3a; color: #fff; font: 13px/20px "Liberation Sans", sans-serif; text-align: center; }
.bubble { position: relative; background: rgba(0, 0, 0, .6); color: #fff; font: 16px/22px "Liberation Sans", "Noto Sans CJK SC", sans-serif; padding: 6px 12px 6px 6px; border-radius: 3px; white-space: nowrap; }
.bubble::before { content: ""; position: absolute; left: -5px; top: 50%; margin-top: -5px; border: 5px solid transparent; border-right: 5px solid rgba(0, 0, 0, .6); border-left: 0; }
.n3 { left: 223px; top: 167px; }
.n3 .dot { left: -29px; top: 6px; }
.n3 .bubble::before { top: 16px; margin-top: 0; }
.n2 { left: 42px; top: 486px; }
.n2 .dot { left: -28px; top: 7px; }
.n4 { left: 863px; top: 582px; }
.n4 .dot { left: -29px; top: 7px; }
.n1 { left: 939px; top: 657px; }
.n1 .dot { left: -29px; top: 7px; }
.ring { position: absolute; left: 937px; top: 617px; width: 36px; height: 35px; border-radius: 50%; background: #fff; border: 5px solid #f73a3a; font: 400 22px/25px "Liberation Serif", serif; text-align: center; color: #333; }
</style>

<style>
html, body { margin: 0; background: #d6d6d6; }
</style>
